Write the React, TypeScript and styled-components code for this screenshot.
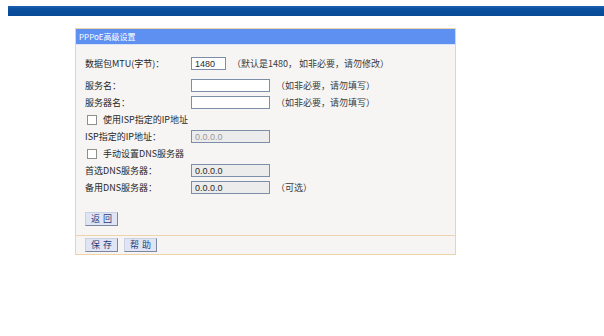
import React from 'react';
import styled, { createGlobalStyle } from 'styled-components';

const GlobalStyle = createGlobalStyle`
  html, body {
    margin: 0;
    padding: 0;
    background: #ffffff;
  }
  body {
    font-family: "Noto Sans CJK SC", "DejaVu Sans", sans-serif;
    font-size: 9px;
    color: #2a2a2a;
  }
`;

const TopBar = styled.div`
  margin: 6px 0 0 8px;
  height: 10px;
  background: linear-gradient(#1f62b0, #0a4f9f 30%, #084a96);
`;

const Panel = styled.div`
  margin: 12px 0 0 75px;
  width: 379px;
  border: 1px solid #efd3a8;
  background: #f6f5f3;
`;

const Header = styled.div`
  height: 15px;
  line-height: 15px;
  padding-left: 3px;
  background: #5e90f2;
  color: #ffffff;
  font-size: 8px;
  border-bottom: 1px solid #d9e4f7;
`;

const Body = styled.div`
  padding: 10px 0 9px 9px;
`;

const Row = styled.div<{ $gap?: number }>`
  display: grid;
  grid-template-columns: 100px auto 1fr;
  align-items: center;
  column-gap: 6px;
  height: 17px;
  margin-bottom: ${(p) => p.$gap ?? 0}px;
`;

const Label = styled.span`
  white-space: nowrap;
  color: #262626;
`;

const Field = styled.input<{ $w: number; $off?: boolean; $dim?: boolean }>`
  box-sizing: border-box;
  width: ${(p) => p.$w}px;
  height: 13px;
  margin: 0;
  padding: 0 3px;
  border: 1px solid #7d8ea8;
  background: ${(p) => (p.$off ? '#ececec' : '#ffffff')};
  color: ${(p) => (p.$dim ? '#9a9a9a' : '#2a2a2a')};
  font-family: "Liberation Sans", Arial, sans-serif;
  font-size: 9px;
  outline: none;
`;

const Hint = styled.span`
  white-space: nowrap;
  color: #3a3a3a;
`;

const CheckRow = styled.label`
  display: flex;
  align-items: center;
  gap: 6px;
  height: 17px;
  padding-left: 2px;
`;

const Box = styled.span`
  box-sizing: border-box;
  width: 10px;
  height: 10px;
  border: 1px solid #8e8e8e;
  background: #ffffff;
`;

const Actions = styled.div`
  display: flex;
  gap: 6px;
`;

const BackArea = styled.div`
  margin-top: 16px;
`;

const Button = styled.button`
  box-sizing: border-box;
  width: 33px;
  height: 14px;
  padding: 0;
  border: 1px solid #7c869e;
  border-top-color: #c9d0e0;
  border-left-color: #c9d0e0;
  background: #dfe5f4;
  color: #253c7a;
  font-family: "Noto Sans CJK SC", sans-serif;
  font-size: 9px;
  line-height: 12px;
  letter-spacing: 3px;
  text-indent: 3px;
  cursor: pointer;
`;

const Footer = styled.div`
  border-top: 1px solid #ecd2ae;
  padding: 2px 0 2px 9px;
`;

export default function App() {
  return (
    <>
      <GlobalStyle />
      <TopBar />
      <Panel>
        <Header>PPPoE高级设置</Header>
        <Body>
          <Row $gap={5}>
            <Label>数据包MTU(字节)：</Label>
            <Field $w={35} defaultValue="1480" />
            <Hint>（默认是1480， 如非必要，请勿修改）</Hint>
          </Row>
          <Row>
            <Label>服务名：</Label>
            <Field $w={79} />
            <Hint>（如非必要，请勿填写）</Hint>
          </Row>
          <Row>
            <Label>服务器名：</Label>
            <Field $w={79} />
            <Hint>（如非必要，请勿填写）</Hint>
          </Row>
          <CheckRow>
            <Box />
            使用ISP指定的IP地址
          </CheckRow>
          <Row>
            <Label>ISP指定的IP地址：</Label>
            <Field $w={79} $off $dim disabled defaultValue="0.0.0.0" />
            <span />
          </Row>
          <CheckRow>
            <Box />
            手动设置DNS服务器
          </CheckRow>
          <Row>
            <Label>首选DNS服务器：</Label>
            <Field $w={79} $off defaultValue="0.0.0.0" />
            <span />
          </Row>
          <Row>
            <Label>备用DNS服务器：</Label>
            <Field $w={79} $off defaultValue="0.0.0.0" />
            <Hint>（可选）</Hint>
          </Row>
          <BackArea>
            <Button>返回</Button>
          </BackArea>
        </Body>
        <Footer>
          <Actions>
            <Button>保存</Button>
            <Button>帮助</Button>
          </Actions>
        </Footer>
      </Panel>
    </>
  );
}
